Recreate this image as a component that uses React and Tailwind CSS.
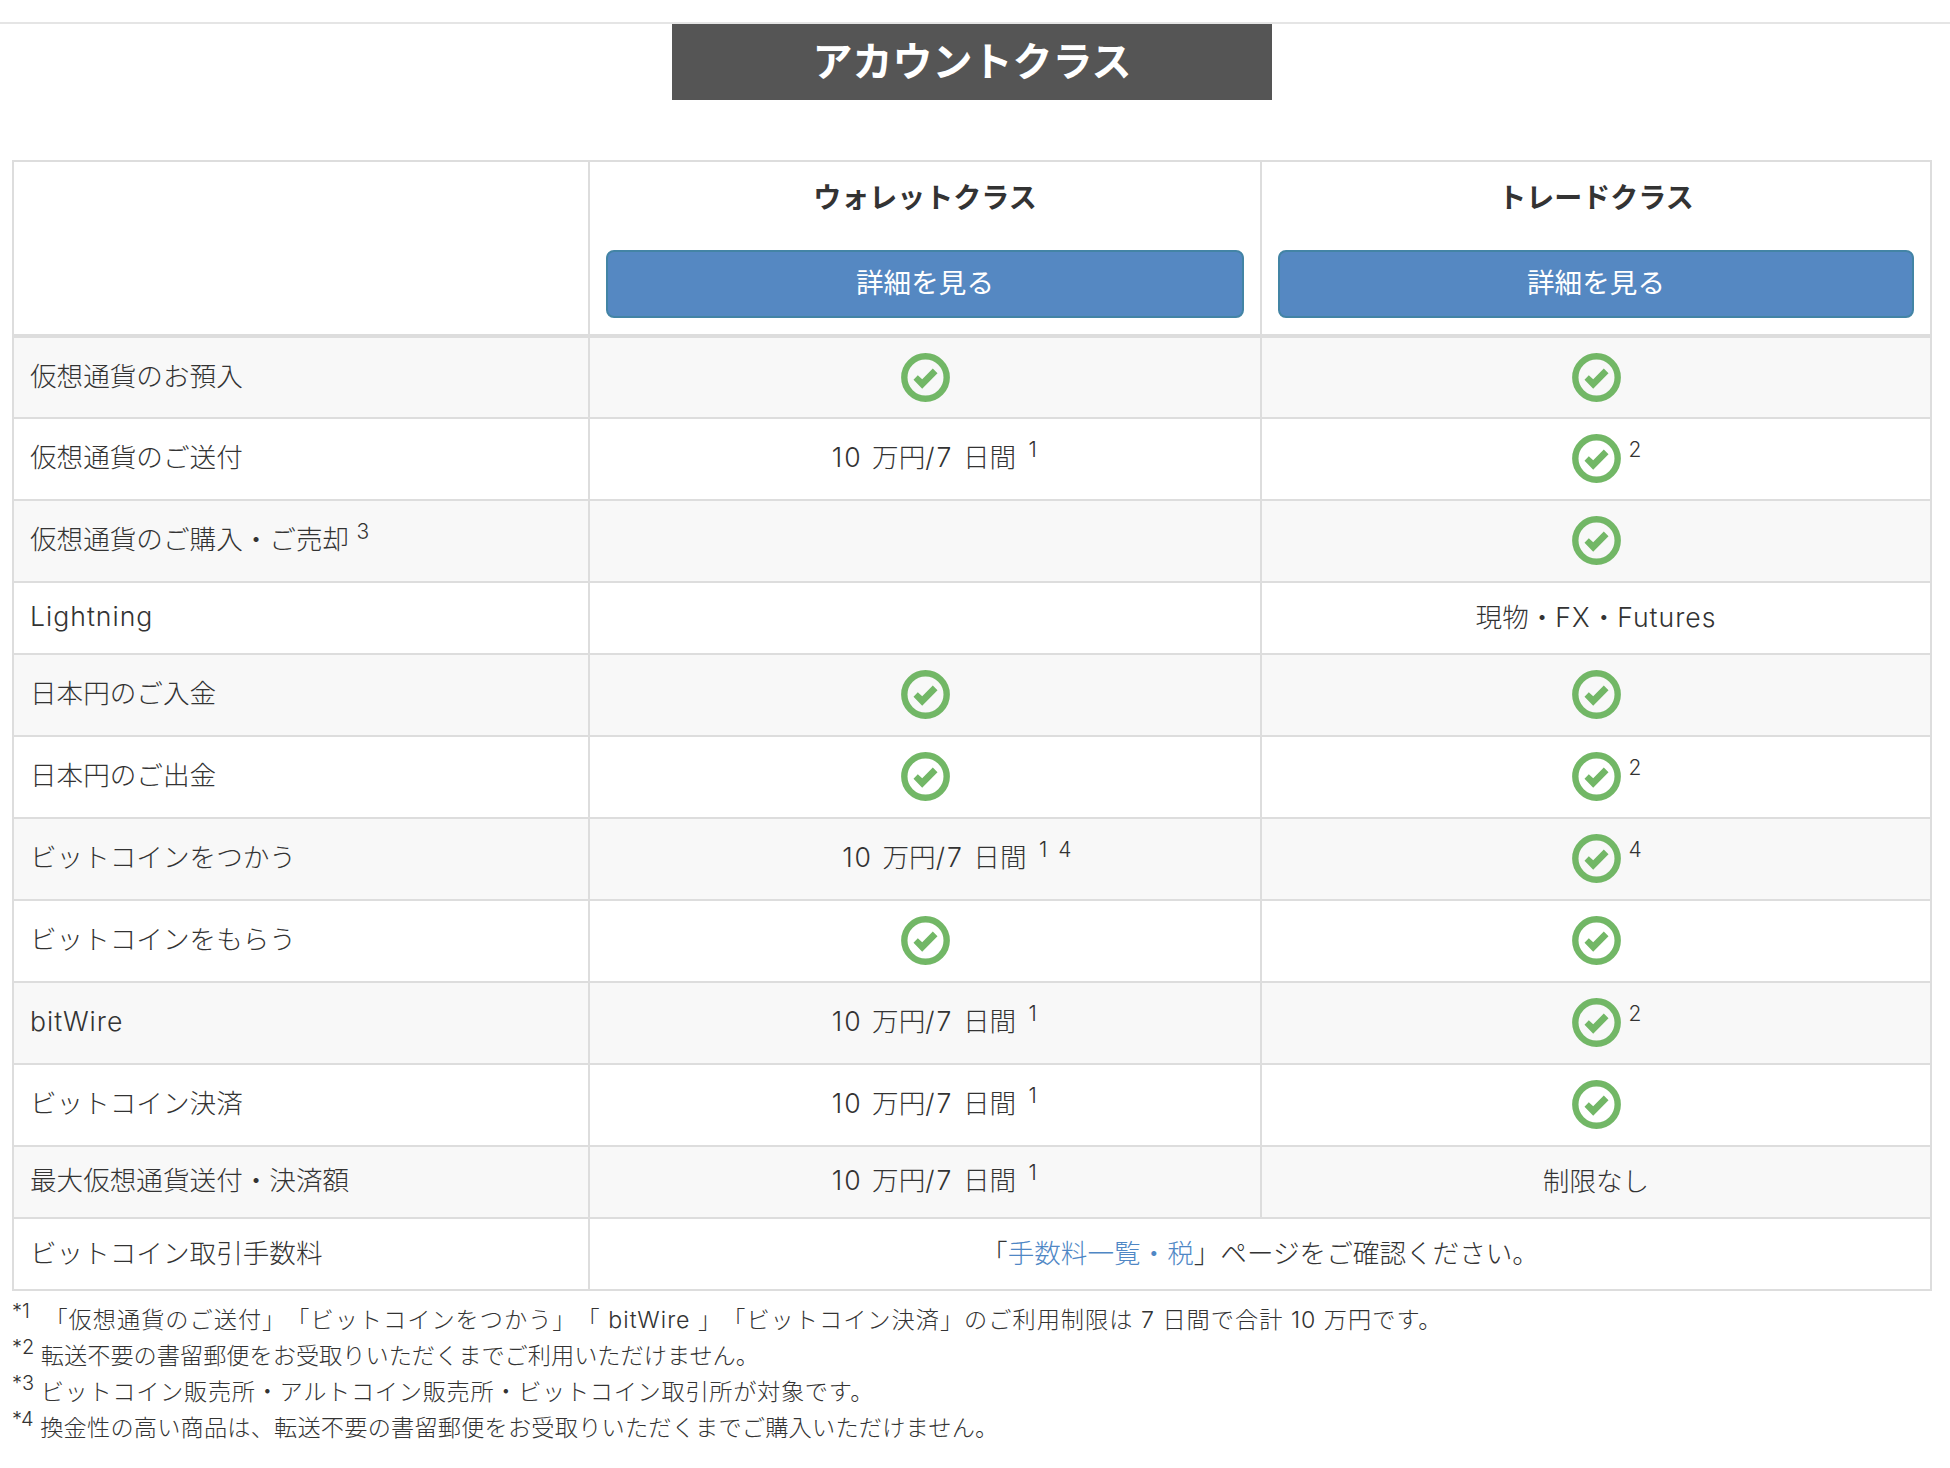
const font = "font-['Inter','Noto_Sans_CJK_JP',sans-serif]"

function Check() {
  return (
    <svg width="49" height="49" viewBox="0 0 49 49" className="inline-block align-middle">
      <circle cx="24.5" cy="24.5" r="21.2" fill="none" stroke="#72b766" strokeWidth="6.4" />
      <path d="M12.5 26.8 L21.2 35.8 L36.5 20.2 L31.8 15.5 L21.2 26.2 L16.8 22.2 Z" fill="#72b766" />
    </svg>
  )
}

function CheckNote({ note }) {
  return (
    <span className="relative inline-block h-[50px] align-middle">
      <Check />
      {note && <span className="absolute left-[57px] top-[1px] text-[21px] leading-[30px]">{note}</span>}
    </span>
  )
}

// latin runs sit wider than the cjk around them
function L({ children, w }) {
  return <span className={w ? 'tracking-[2px]' : 'tracking-[1px]'}>{children}</span>
}

function Limit({ double }) {
  return (
    <span className={`inline-block pb-[2px] ${double ? '-mr-[65px]' : '-mr-[20px]'}`}>
      <L w>10 </L>万円<L w>/7 </L>日間{' '}
      <sup className="ml-[5px] text-[21px] tracking-[1.5px] [word-spacing:2px]">{double ? '1 4' : '1'}</sup>
    </span>
  )
}

const rows = [
  { label: '仮想通貨のお預入', wallet: <CheckNote />, trade: <CheckNote /> },
  { label: '仮想通貨のご送付', wallet: <Limit />, trade: <CheckNote note="2" /> },
  {
    label: (
      <>
        仮想通貨のご購入・ご売却 <sup className="text-[21px]">3</sup>
      </>
    ),
    trade: <CheckNote />,
  },
  {
    label: <L>Lightning</L>,
    trade: (
      <>
        現物・<L>FX</L>・<L>Futures</L>
      </>
    ),
    short: true,
  },
  { label: '日本円のご入金', wallet: <CheckNote />, trade: <CheckNote /> },
  { label: '日本円のご出金', wallet: <CheckNote />, trade: <CheckNote note="2" /> },
  { label: 'ビットコインをつかう', wallet: <Limit double />, trade: <CheckNote note="4" /> },
  { label: 'ビットコインをもらう', wallet: <CheckNote />, trade: <CheckNote /> },
  { label: <L>bitWire</L>, wallet: <Limit />, trade: <CheckNote note="2" /> },
  { label: 'ビットコイン決済', wallet: <Limit />, trade: <CheckNote /> },
  { label: '最大仮想通貨送付・決済額', wallet: <Limit />, trade: '制限なし', short: true },
]

const notes = [
  ['1', 'pl-[8px] tracking-[1px]', '「仮想通貨のご送付」「ビットコインをつかう」「 bitWire 」「ビットコイン決済」のご利用制限は 7 日間で合計 10 万円です。'],
  ['2', '', '転送不要の書留郵便をお受取りいただくまでご利用いただけません。'],
  ['3', 'tracking-[0.7px]', 'ビットコイン販売所・アルトコイン販売所・ビットコイン取引所が対象です。'],
  ['4', 'tracking-[0.2px]', '換金性の高い商品は、転送不要の書留郵便をお受取りいただくまでご購入いただけません。'],
]

function ClassHead({ title }) {
  return (
    <th className="border-2 border-[#dddddd] border-b-[4px] px-[16px] pt-[16px] pb-[16px] align-top font-bold">
      <div className="h-[72px] text-[28px] leading-[40px]">{title}</div>
      <button className="block h-[68px] w-full rounded-[8px] border-2 border-[#4384a5] bg-[#5588c2] text-[27.6px] font-normal text-white">
        詳細を見る
      </button>
    </th>
  )
}

export default function App() {
  return (
    <div className={`${font} min-h-[1468px] bg-white pt-[22px] text-[26.6px] font-light text-[#333333] [text-spacing-trim:space-all]`}>
      <div className="border-t-2 border-[#e5e5e5]">
        <div className="w-[1944px] px-[12px]">
          <h2 className="mx-auto flex h-[76px] w-[600px] items-center justify-center bg-[#555555] text-[40px] font-bold text-white">
            アカウントクラス
          </h2>
          <table className="mt-[60px] w-full table-fixed border-collapse">
            <colgroup>
              <col className="w-[576px]" />
              <col className="w-[672px]" />
              <col />
            </colgroup>
            <thead>
              <tr>
                <th className="border-2 border-[#dddddd] border-b-[4px]"></th>
                <ClassHead title="ウォレットクラス" />
                <ClassHead title="トレードクラス" />
              </tr>
            </thead>
            <tbody>
              {rows.map((r, i) => (
                <tr key={i} className={`${i % 2 === 0 ? 'bg-[#f8f8f8]' : 'bg-white'} ${r.short ? 'h-[72px]' : 'h-[82px]'}`}>
                  <td className="border-2 border-[#dddddd] px-[16px] pb-[2px]">{r.label}</td>
                  <td className="border-2 border-[#dddddd] px-[16px] text-center">{r.wallet}</td>
                  <td className="border-2 border-[#dddddd] px-[16px] text-center">{r.trade}</td>
                </tr>
              ))}
              <tr className="h-[72px] bg-white">
                <td className="border-2 border-[#dddddd] px-[16px]">ビットコイン取引手数料</td>
                <td colSpan={2} className="border-2 border-[#dddddd] px-[16px] text-center">
                  「<a className="text-[#4f87c5]">手数料一覧・税</a>」ページをご確認ください。
                </td>
              </tr>
            </tbody>
          </table>
          <div className="mt-[11px] text-[23.2px] leading-[36px]">
            {notes.map(([n, cls, text]) => (
              <div key={n}>
                <sup className="text-[20px]">*{n}</sup> <span className={cls}>{text}</span>
              </div>
            ))}
          </div>
        </div>
      </div>
    </div>
  )
}
